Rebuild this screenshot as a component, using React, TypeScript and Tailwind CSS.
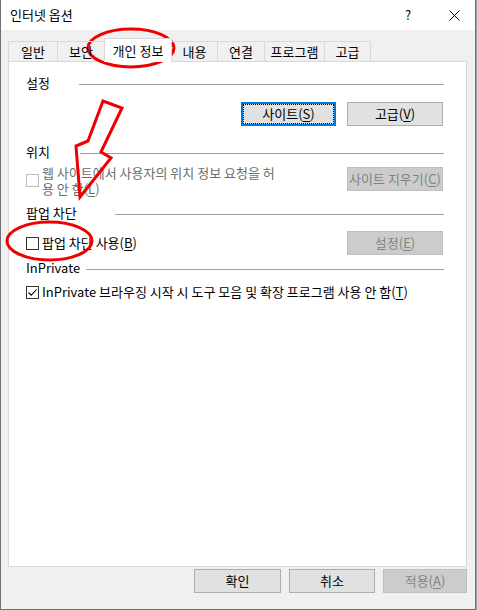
import React from "react";

function U({ children }: { children: React.ReactNode }) {
  return <span className="underline underline-offset-[2px] decoration-1">{children}</span>;
}

type BtnProps = { children: React.ReactNode; className?: string; disabled?: boolean; focused?: boolean };

function Btn({ children, className = "", disabled, focused }: BtnProps) {
  const base = "h-[24px] shrink-0 flex items-center justify-center leading-[16px] whitespace-nowrap";
  const look = disabled
    ? "bg-[#cccccc] border border-[#bfbfbf] text-[#838383]"
    : focused
    ? "bg-[#e1e1e1] border-2 border-[#0078d7] text-black outline-1 outline-dotted outline-black outline-offset-[-3px]"
    : "bg-[#e1e1e1] border border-[#adadad] text-black";
  return <div className={`${base} ${look} ${className}`}>{children}</div>;
}

function Check({ checked, disabled }: { checked?: boolean; disabled?: boolean }) {
  return (
    <span
      className={`w-[13px] h-[13px] shrink-0 bg-white border flex items-center justify-center ${
        disabled ? "border-[#bcbcbc]" : "border-[#333333]"
      }`}
    >
      {checked && (
        <svg width="11" height="11" viewBox="0 0 11 11">
          <path d="M1.5 5.5 L4.2 8.2 L9.5 2.5" stroke="#000" strokeWidth="1.1" fill="none" />
        </svg>
      )}
    </span>
  );
}

function Header({ label, labelClass, className }: { label: string; labelClass: string; className: string }) {
  return (
    <div className={`flex items-start h-[16px] ${className}`}>
      <span className={`leading-[16px] whitespace-nowrap shrink-0 ${labelClass}`}>{label}</span>
      <div className="flex-1 h-px bg-[#a0a0a0] mt-[9px]" />
    </div>
  );
}

function Tab({ label, className }: { label: string; className: string }) {
  return (
    <div className={`flex items-center justify-center whitespace-nowrap leading-[16px] border-[#d9d9d9] ${className}`}>
      {label}
    </div>
  );
}

export default function App() {
  return (
    <div className="relative flex w-[477px] h-[610px] bg-[#d8d8d8] font-['Noto_Sans_CJK_KR','Noto_Sans',sans-serif] text-[13px] text-black">
      <div className="w-[476px] h-[610px] shrink-0 flex flex-col bg-[#f0f0f0] border-l border-r border-b border-[#707070]">
        {/* title bar */}
        <div className="h-[30px] shrink-0 bg-white flex items-center">
          <span className="pl-[9px] leading-[16px] whitespace-nowrap">인터넷 옵션</span>
          <span className="ml-auto w-[14px] mr-[18px] text-center leading-[16px]">?</span>
          <div className="w-[42px] h-[30px] flex items-center justify-center">
            <svg width="11" height="11" viewBox="0 0 11 11">
              <path d="M0.5 0.5 L10.5 10.5 M10.5 0.5 L0.5 10.5" stroke="#000" strokeWidth="1" />
            </svg>
          </div>
        </div>

        {/* body */}
        <div className="flex flex-col pl-[7px] pr-[8px] pt-[8px]">
          {/* tabs */}
          <div className="relative z-10 flex items-end h-[24px]">
            <Tab label="일반" className="w-[49px] h-[20px] mb-px border-l border-t pt-px" />
            <Tab label="보안" className="w-[47px] h-[20px] mb-px border-l border-t pt-px" />
            <Tab label="개인 정보" className="w-[68px] h-[24px] bg-white border-l border-t border-r" />
            <Tab label="내용" className="w-[46px] h-[20px] mb-px border-t border-r pt-px" />
            <Tab label="연결" className="w-[47px] h-[20px] mb-px border-t border-r pt-px" />
            <Tab label="프로그램" className="w-[60px] h-[20px] mb-px border-t border-r pt-px" />
            <Tab label="고급" className="w-[46px] h-[20px] mb-px border-t border-r pt-px" />
          </div>

          {/* panel */}
          <div className="-mt-px h-[506px] bg-white border border-[#d9d9d9] flex flex-col pl-[17px] pr-[22px]">
            <Header label="설정" labelClass="w-[53px]" className="mt-[13px]" />
            <div className="mt-[11px] flex justify-end gap-[11px] mr-[1px]">
              <Btn focused className="w-[95px]">
                사이트(<U>S</U>)
              </Btn>
              <Btn className="w-[96px]">
                고급(<U>V</U>)
              </Btn>
            </div>

            <Header label="위치" labelClass="w-[54px]" className="mt-[18px]" />
            <div className="mt-[5px] flex items-start">
              <div className="mt-[9px]">
                <Check disabled />
              </div>
              <div className="ml-[3px] leading-[16px] text-[#6d6d6d] whitespace-nowrap">
                웹 사이트에서 사용자의 위치 정보 요청을 허
                <br />
                용 안 함(<U>L</U>)
              </div>
              <Btn disabled className="ml-auto mt-[2px] mr-[1px] w-[96px]">
                사이트 지우기(<U>C</U>)
              </Btn>
            </div>

            <Header label="팝업 차단" labelClass="w-[89px]" className="mt-[8px]" />
            <div className="mt-[10px] flex items-center h-[24px]">
              <Check />
              <span className="ml-[3px] leading-[16px] whitespace-nowrap">
                팝업 차단 사용(<U>B</U>)
              </span>
              <Btn disabled className="ml-auto mr-[1px] w-[96px]">
                설정(<U>E</U>)
              </Btn>
            </div>

            <Header label="InPrivate" labelClass="w-[60px]" className="mt-[5px]" />
            <div className="mt-[8px] flex items-center h-[16px]">
              <Check checked />
              <span className="ml-[3px] leading-[16px] whitespace-nowrap">
                InPrivate 브라우징 시작 시 도구 모음 및 확장 프로그램 사용 안 함(<U>T</U>)
              </span>
            </div>
          </div>

          {/* bottom buttons */}
          <div className="mt-[2px] flex justify-end gap-[8px]">
            <Btn className="w-[87px]">확인</Btn>
            <Btn className="w-[86px]">취소</Btn>
            <Btn disabled className="w-[84px]">
              적용(<U>A</U>)
            </Btn>
          </div>
        </div>
      </div>
      <div className="w-px h-[610px] bg-[#9aa3ad]" />

      {/* red annotations */}
      <svg className="absolute inset-0 pointer-events-none" width="477" height="610" viewBox="0 0 477 610">
        <ellipse cx="131" cy="48" rx="43" ry="19" fill="none" stroke="#ee0000" strokeWidth="3" />
        <ellipse cx="49.5" cy="241" rx="42.5" ry="19" fill="none" stroke="#ee0000" strokeWidth="3" />
        <polygon
          points="103,101 122,108 101,152 111,158 80,197 76,146 88,141"
          fill="none"
          stroke="#ee0000"
          strokeWidth="3"
          strokeLinejoin="miter"
        />
      </svg>
    </div>
  );
}
